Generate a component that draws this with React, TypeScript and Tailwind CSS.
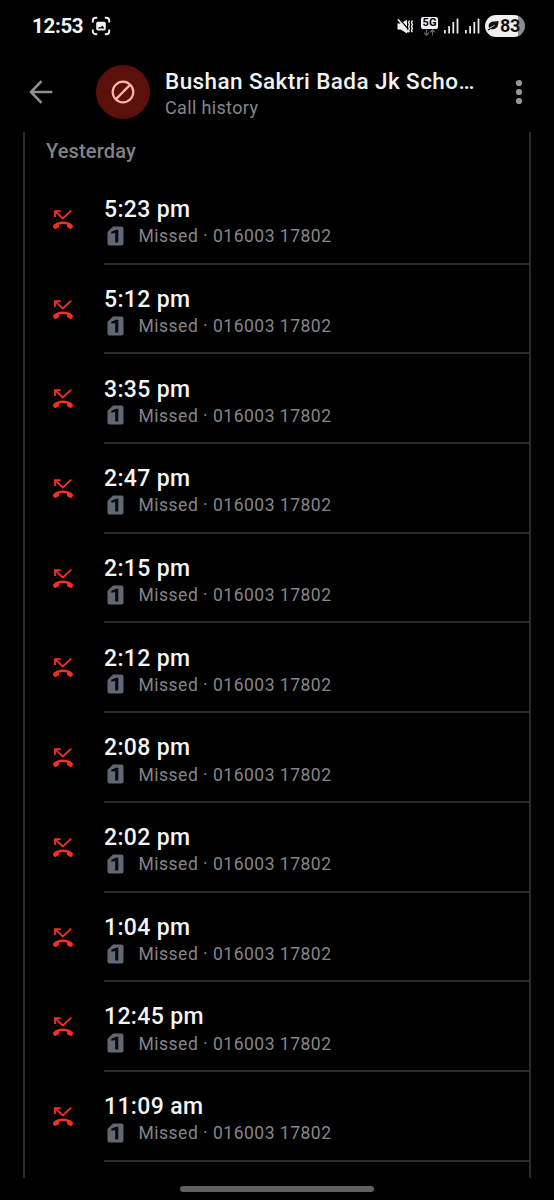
const calls = [
  "5:23 pm",
  "5:12 pm",
  "3:35 pm",
  "2:47 pm",
  "2:15 pm",
  "2:12 pm",
  "2:08 pm",
  "2:02 pm",
  "1:04 pm",
  "12:45 pm",
  "11:09 am",
] as const;

function CaptureIcon() {
  return (
    <svg width="20" height="20" viewBox="0 0 20 20" fill="none" aria-hidden="true">
      <path
        d="M1.800 6.500V4.800a3 3 0 0 1 3-3h1.400M13.800 1.800h1.400a3 3 0 0 1 3 3v1.700M18.200 13.500v1.700a3 3 0 0 1-3 3h-1.400M6.200 18.200H4.800a3 3 0 0 1-3-3v-1.700"
        stroke="#f2f2f2"
        strokeWidth="1.9"
      />
      <rect x="5.2" y="5.8" width="9.6" height="8.6" rx="1.6" fill="#f2f2f2" />
      <path d="M6.600 12.600l1.800-1.800 1.200.6 1.900-1.900 1.900 3.100z" fill="#000" />
    </svg>
  );
}

function MuteVibrateIcon() {
  return (
    <svg width="17" height="17" viewBox="0 0 17 17" fill="none" aria-hidden="true">
      <path d="M0.500 5.500h3.200L10 1.800v13.700l-6.300-4H0.500z" fill="#f2f2f2" />
      <path d="M2.400 0.800l9 10.500" stroke="#000" strokeWidth="1.3" />
      <path d="M1 1.200l10.500 13" stroke="#f2f2f2" strokeWidth="1.5" />
      <path
        d="M12.400 2.500l-0.800 2 0.800 2-0.800 2 0.800 2-0.800 2 0.700 1.800M15.400 2.500l-0.900 2 0.900 2-0.900 2 0.900 2-0.900 2 0.800 1.800"
        stroke="#f2f2f2"
        strokeWidth="1.4"
      />
    </svg>
  );
}

function NetworkIcon() {
  return (
    <div className="flex w-[17px] flex-col items-center">
      <span className="flex h-[12px] w-full items-center justify-center rounded-[2px] bg-[#f2f2f2] text-[11px] leading-none font-bold text-black">
        5G
      </span>
      <svg width="13" height="7" viewBox="0 0 13 7" fill="none" aria-hidden="true">
        <path
          d="M3.500 0.500v5.500M1 3.700l2.500 2.500L6 3.700M9.500 6.500V1M7 3.300L9.500 0.800 12 3.300"
          stroke="#666"
          strokeWidth="1.2"
        />
      </svg>
    </div>
  );
}

function SignalIcon() {
  return (
    <svg width="15" height="16" viewBox="0 0 15 16" fill="#e8e8e8" aria-hidden="true">
      <rect x="0" y="12" width="1.8" height="3.5" rx="0.5" />
      <rect x="4.2" y="8" width="1.8" height="7.5" rx="0.5" />
      <rect x="8.4" y="4" width="1.8" height="11.5" rx="0.5" />
      <rect x="12.6" y="0.5" width="1.8" height="15" rx="0.5" />
    </svg>
  );
}

function Battery() {
  return (
    <div className="flex h-[22px] w-[40px] items-center rounded-full bg-linear-to-r from-[#f0f0f0] from-83% to-[#8c8c8c] to-83% pl-[2px]">
      <svg width="12" height="12" viewBox="0 0 12 12" aria-hidden="true">
        <path
          d="M11.700 1C8 1.800 4.500 0.800 2.400 3.500 1.200 5 1.500 6.800 2.200 8L0.600 9.600l1 1 1.900-1.700c3.700 1 7-0.700 7.600-4.200z"
          fill="#111"
        />
        <path d="M0.600 9C3 8 5 7 7.500 5.200" stroke="#f0f0f0" strokeWidth="0.9" fill="none" />
      </svg>
      <span className="ml-px text-[18px] leading-none font-bold tracking-[-0.3px] text-[#111]">83</span>
    </div>
  );
}

function StatusBar() {
  return (
    <div className="flex h-[52px] items-center justify-between pr-[29px] pl-[32px]">
      <div className="flex items-center gap-[8px]">
        <span className="w-[51px] text-[20.5px] leading-none font-bold tracking-[-0.3px] whitespace-nowrap text-[#f5f5f5]">
          12:53
        </span>
        <CaptureIcon />
      </div>
      <div className="flex items-center">
        <MuteVibrateIcon />
        <div className="ml-[7px]">
          <NetworkIcon />
        </div>
        <div className="ml-[6px] flex gap-[6px]">
          <SignalIcon />
          <SignalIcon />
        </div>
        <div className="ml-[5px]">
          <Battery />
        </div>
      </div>
    </div>
  );
}

function Header() {
  return (
    <header className="flex h-[80px] items-center">
      <button aria-label="Back" className="ml-[29px]">
        <svg width="24" height="24" viewBox="0 0 24 24" fill="none" aria-hidden="true">
          <path d="M23.300 12H2M12.500 1.200L2 12l10.500 10.800" stroke="#8e8e96" strokeWidth="2.6" />
        </svg>
      </button>
      <div className="ml-[43px] flex size-[54px] items-center justify-center rounded-full bg-[#5c100b]">
        <svg width="24" height="24" viewBox="0 0 24 24" fill="none" aria-hidden="true">
          <circle cx="12" cy="12" r="10.3" stroke="#ffb4a9" strokeWidth="2.2" />
          <path d="M4.900 19.100L19.100 4.900" stroke="#ffb4a9" strokeWidth="2.2" />
        </svg>
      </div>
      <div className="ml-[15px] flex min-w-0 flex-col pt-[2px]">
        <h1 className="text-[22.5px] leading-[28px] font-medium tracking-[0.42px] whitespace-nowrap text-[#f2f2f2]">
          Bushan Saktri Bada Jk Scho…
        </h1>
        <p className="pt-px text-[18px] leading-[24px] tracking-[0.35px] text-[#85858a]">Call history</p>
      </div>
      <button aria-label="More options" className="mr-[31px] ml-auto">
        <svg width="8" height="26" viewBox="0 0 8 26" fill="#94949a" aria-hidden="true">
          <circle cx="4" cy="4" r="3.1" />
          <circle cx="4" cy="13" r="3.1" />
          <circle cx="4" cy="22" r="3.1" />
        </svg>
      </button>
    </header>
  );
}

function MissedCallIcon() {
  return (
    <svg width="22" height="22" viewBox="0 0 22 22" fill="none" aria-hidden="true">
      <path d="M8.600 2.200H3v5.800M3 2.200l7.800 7.300L19.200 1.600" stroke="#f5301f" strokeWidth="1.8" />
      <path
        d="M1.500 16.100C3.500 13.800 7 12.500 11 12.500s7.500 1.300 9.500 3.600c0.700 0.900 0.700 1.900 0 2.700l-0.700 0.800c-0.400 0.400-0.900 0.500-1.400 0.300l-2.700-1.400c-0.500-0.300-0.700-0.700-0.700-1.200v-1.800c-1.200-0.400-2.600-0.600-4-0.600s-2.800 0.200-4 0.600v1.800c0 0.500-0.200 0.900-0.700 1.200l-2.700 1.400c-0.500 0.200-1 0.100-1.400-0.300l-0.700-0.800c-0.700-0.800-0.700-1.800 0-2.700z"
        fill="#f5301f"
      />
    </svg>
  );
}

function SimBadge() {
  return (
    <svg width="17" height="20" viewBox="0 0 17 20" aria-hidden="true">
      <path d="M6 0.500h8.500a2 2 0 0 1 2 2v15a2 2 0 0 1-2 2h-12a2 2 0 0 1-2-2V6z" fill="#626873" />
      <path d="M4.300 7.800V5.700L9 3.800h2.300v12.700H8.200V7z" fill="#08090b" />
    </svg>
  );
}

function CallRow({ time }: { time: string }) {
  return (
    <li className="flex h-[89.7px]">
      <div className="w-[79px] shrink-0 pt-[34px] pl-[27px]">
        <MissedCallIcon />
      </div>
      <div className="flex-1 border-b-2 border-[#2b2b2b] pt-[21.3px]">
        <div className="text-[23px] leading-[28px] font-medium tracking-[0.35px] text-[#f5f5f5]">{time}</div>
        <div className="flex h-[23.5px] items-center text-[17.5px] tracking-[0.5px] whitespace-nowrap text-[#85858a]">
          <div className="mr-[15px] ml-[2.5px]">
            <SimBadge />
          </div>
          <span className="pt-px">Missed · 016003 17802</span>
        </div>
      </div>
    </li>
  );
}

export default function App() {
  return (
    <div className="flex h-[1200px] w-[554px] flex-col overflow-hidden bg-black font-[Roboto,sans-serif]">
      <StatusBar />
      <Header />
      <main className="ml-[23px] h-[1046px] w-[508px] border-x-2 border-[#2b2b2b]">
        <h2 className="h-[43px] pt-[5px] pl-[21px] text-[20px] leading-[28px] font-medium tracking-[0.15px] text-[#808388]">
          Yesterday
        </h2>
        <ul>
          {calls.map((time) => (
            <CallRow key={time} time={time} />
          ))}
        </ul>
      </main>
      <div className="mx-auto mt-[8px] h-[6px] w-[194px] rounded-full bg-[#616161]" />
    </div>
  );
}
